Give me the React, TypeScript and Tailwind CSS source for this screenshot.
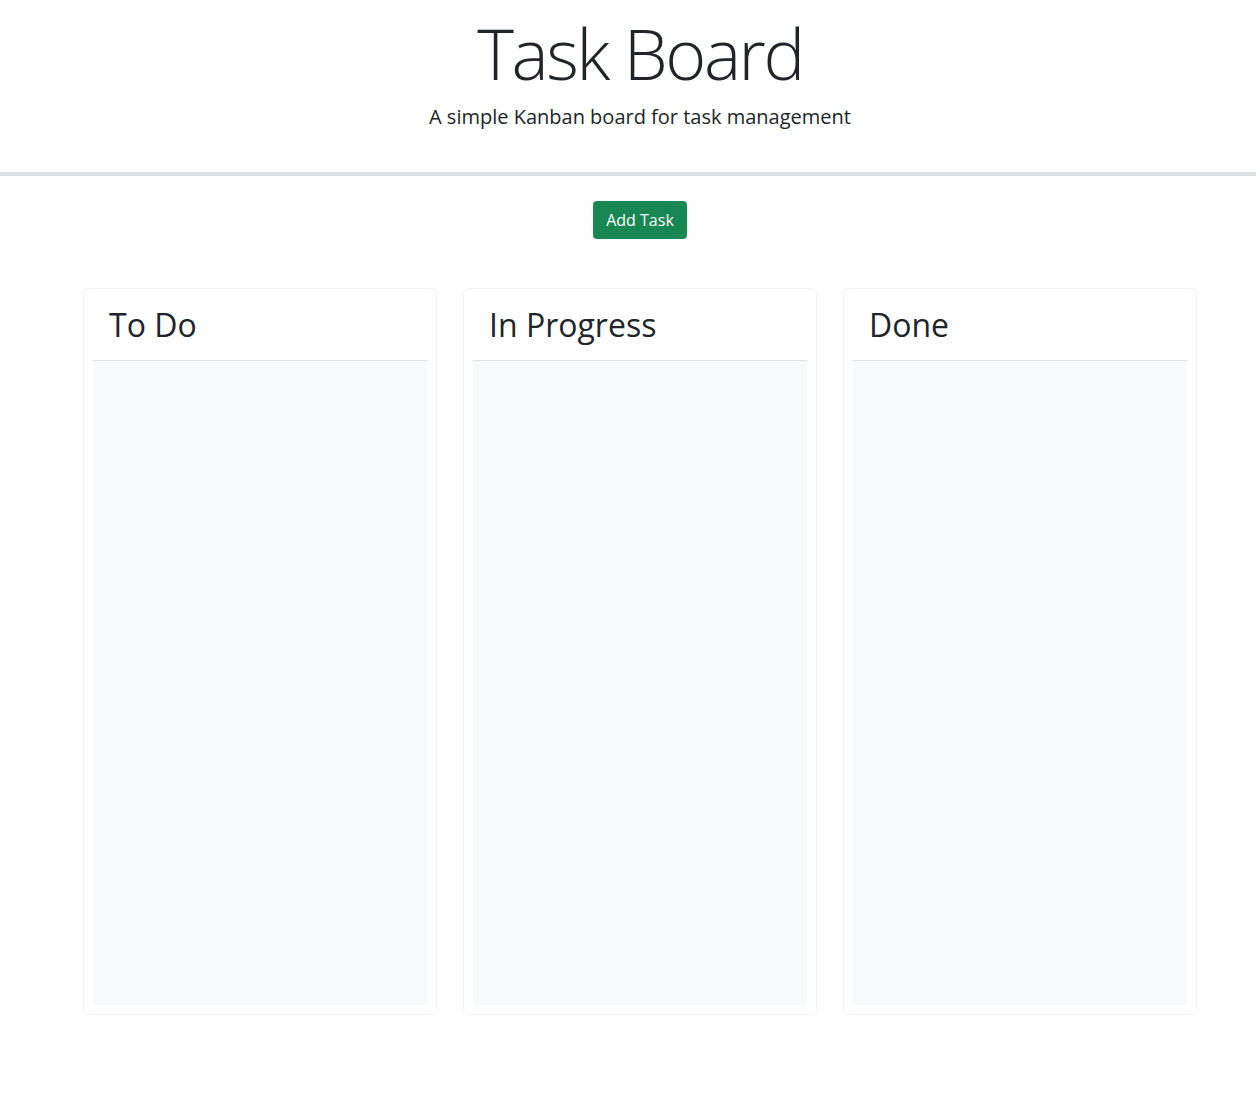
const columns = ["To Do", "In Progress", "Done"];

export default function App() {
  return (
    <div className="min-h-[1111px] bg-white pl-[24px] text-[#212529] font-['Open_Sans',sans-serif]">
      <header className="-ml-[24px] border-b-4 border-[#dee2e6] pt-[11px] pb-[40px] pl-[24px] text-center">
        <h1 className="text-[70px] font-[350] leading-[84px] tracking-[-2.4px]">Task Board</h1>
        <p className="mt-[7px] text-[20px] leading-[30px]">
          A simple Kanban board for task management
        </p>
      </header>

      <div className="mt-[25px] flex justify-center">
        <button className="h-[38px] rounded-[4px] bg-[#198754] px-[13px] text-[16px] leading-[24px] text-white">
          Add Task
        </button>
      </div>

      <main className="mx-auto mt-[49px] grid w-[1140px] grid-cols-3">
        {columns.map((title) => (
          <div key={title} className="px-[13px]">
            <section className="flex h-[727px] flex-col rounded-[6px] border border-[#f3f3f3] p-[9px]">
              <h2 className="border-b border-[#dee2e6] px-[16px] pt-[8px] pb-[16px] text-[32px] leading-[38.4px]">
                {title}
              </h2>
              <div className="flex-1 bg-[#f8f9fa]" />
            </section>
          </div>
        ))}
      </main>
    </div>
  );
}
